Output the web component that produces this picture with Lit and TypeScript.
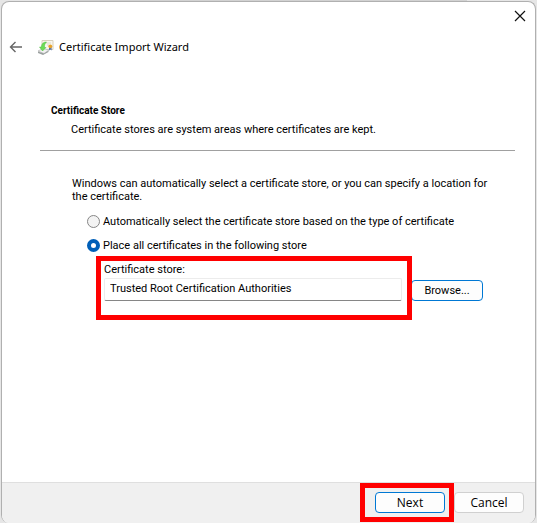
import { LitElement, html, css } from "lit";
import { customElement, state } from "lit/decorators.js";

@customElement("app-root")
export class AppRoot extends LitElement {
  @state() private mode = "place";

  static styles = css`
    :host {
      display: flex;
      min-height: 100vh;
      box-sizing: border-box;
      padding: 1px 1px 0;
      background: linear-gradient(90deg, #e6e6e6 13%, #d2d2d2 13%, #d2d2d2 87%, #e6e6e6 87%);
      color: #000;
      font: 11px/13px Roboto, Tahoma, sans-serif;
    }
    * {
      box-sizing: border-box;
    }
    button,
    input {
      font: inherit;
      color: inherit;
      margin: 0;
    }
    .dialog {
      flex: 1;
      min-width: 0;
      display: flex;
      flex-direction: column;
      background: #fff;
      border: 1px solid #b0b0b0;
      border-bottom: 0;
      border-radius: 8px;
      overflow: hidden;
    }
    .caption {
      display: flex;
      justify-content: flex-end;
    }
    .icon-button {
      display: flex;
      border: 0;
      padding: 0;
      background: none;
    }
    .close {
      padding: 8px 9px;
    }
    .titlebar {
      display: flex;
      align-items: center;
      height: 34px;
      padding-left: 7px;
    }
    .titlebar h1 {
      margin: 0 0 0 5px;
      font: 11px/16px "Noto Sans", "Segoe UI", sans-serif;
    }
    .app-icon {
      margin-left: 14px;
    }
    .intro {
      margin: 39px 20px 0 38px;
      padding: 0 10px 14px 11px;
      border-bottom: 1px solid #a0a0a0;
    }
    .intro h2 {
      margin: 0;
      font-size: 10px;
      font-weight: 700;
      line-height: 16px;
    }
    .intro p {
      margin: 4px 0 0 20px;
    }
    .content {
      flex: 1;
      padding: 26px 36px 20px 70px;
    }
    .content p {
      margin: 0 0 11px;
    }
    .option {
      display: flex;
      align-items: center;
      gap: 3px;
      height: 14px;
      margin: 0 0 10px 15px;
    }
    .option input {
      appearance: none;
      flex: none;
      width: 13px;
      height: 13px;
      border: 1px solid #868686;
      border-radius: 50%;
      background: #f3f3f3;
    }
    .option input:checked {
      border: 4px solid #005fb8;
      background: #fff;
    }
    .store {
      display: flex;
      align-items: flex-end;
      gap: 9px;
      margin: 11px 0 0 32px;
    }
    .field {
      position: relative;
      flex: 0 1 298px;
      min-width: 0;
      display: flex;
      flex-direction: column;
      gap: 2px;
    }
    .field input {
      width: 100%;
      height: 23px;
      padding: 0 5px 2px;
      border: 1px solid #ececec;
      border-bottom-color: #868686;
      border-radius: 2px;
      background: #fff;
      outline: 0;
    }
    .mark {
      position: absolute;
      border: 5px solid #f00;
      pointer-events: none;
    }
    .field .mark {
      inset: -7px -10px -19px -8px;
    }
    .push {
      width: 72px;
      height: 21px;
      padding: 0;
      border: 1px solid #d0d0d0;
      border-radius: 4px;
      background: #fdfdfd;
    }
    .accent {
      border-color: #0078d4;
    }
    .footer {
      display: flex;
      justify-content: flex-end;
      gap: 9px;
      padding: 9px 11px 10px;
      background: #f0f0f0;
      border-top: 1px solid #dfdfdf;
    }
    .footer .push {
      font: 12px "Open Sans", "Segoe UI", sans-serif;
      width: 70px;
    }
    .next {
      position: relative;
      display: flex;
    }
    .next .mark {
      inset: -9px -9px -9px -15px;
    }
  `;

  render() {
    return html`
      <main class="dialog">
        <div class="caption">
          <button class="icon-button close" aria-label="Close">
            <svg width="12" height="12" viewBox="0 0 12 12" stroke="#111" stroke-width="1.2">
              <path d="M1 1L11 11M11 1L1 11" />
            </svg>
          </button>
        </div>
        <header class="titlebar">
          <button class="icon-button" aria-label="Back">
            <svg width="14" height="12" viewBox="0 0 14 12" fill="none" stroke="#666" stroke-width="1.4">
              <path d="M13 6H1.5M6.5 1L1.5 6L6.5 11" />
            </svg>
          </button>
          <svg class="app-icon" width="17" height="17" viewBox="0 0 17 17" aria-hidden="true">
            <path d="M5 1.5H16V10.5H5Z" fill="#faf7ef" stroke="#d8d0bd" />
            <path d="M9 4H14M10 6H12" stroke="#ddd8cc" />
            <path d="M1 12L6 9.5L12 11L7 14.5Z" fill="#f2f2f2" stroke="#bbb" stroke-width=".8" />
            <path d="M1 12.5V14L6 16L11.5 13V11.5L7 14.5Z" fill="#9aa09f" />
            <path d="M9.5 3C6.5 3 4.5 4.5 4.5 8H2.5L5.5 12L9 8.5H7.5C7.3 6 8 4.5 9.5 3Z" fill="#6ddc58" stroke="#4cbd3e" stroke-width=".5" />
            <path d="M12 8V11.5L13.3 10.5L14.6 11.5V8Z" fill="#5573a8" />
            <circle cx="13.3" cy="7.3" r="1.9" fill="#e8a42a" />
          </svg>
          <h1>Certificate Import Wizard</h1>
        </header>
        <section class="intro">
          <h2>Certificate Store</h2>
          <p>Certificate stores are system areas where certificates are kept.</p>
        </section>
        <section class="content">
          <p>Windows can automatically select a certificate store, or you can specify a location for the certificate.</p>
          ${this.option("auto", "Automatically select the certificate store based on the type of certificate")}
          ${this.option("place", "Place all certificates in the following store")}
          <div class="store">
            <div class="field">
              <label for="store">Certificate store:</label>
              <input id="store" type="text" value="Trusted Root Certification Authorities" />
              <span class="mark"></span>
            </div>
            <button class="push accent">Browse...</button>
          </div>
        </section>
        <footer class="footer">
          <div class="next">
            <button class="push accent">Next</button>
            <span class="mark"></span>
          </div>
          <button class="push">Cancel</button>
        </footer>
      </main>
    `;
  }

  private option(value: string, text: string) {
    return html`<div class="option">
      <input
        type="radio"
        name="mode"
        id=${value}
        .checked=${this.mode === value}
        @change=${() => (this.mode = value)}
      />
      <label for=${value}>${text}</label>
    </div>`;
  }
}
